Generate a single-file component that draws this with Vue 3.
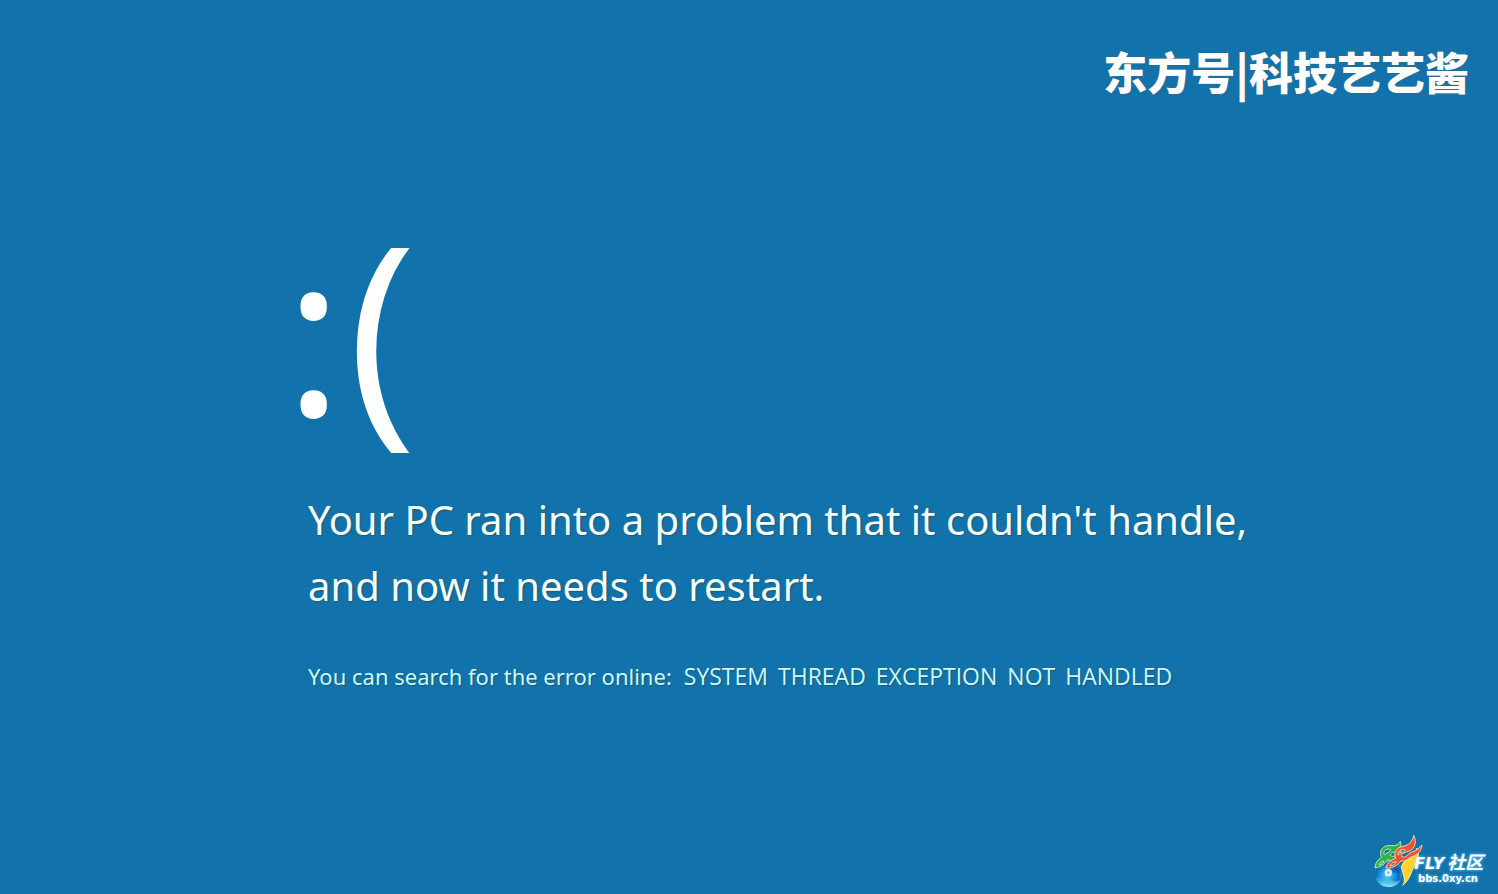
<script setup>
const messageLines = [
  "Your PC ran into a problem that it couldn't handle,",
  'and now it needs to restart.',
]
const errorWords = ['SYSTEM', 'THREAD', 'EXCEPTION', 'NOT', 'HANDLED']
</script>

<template>
  <div class="screen">
    <header class="channel">东方号|科技艺艺酱</header>

    <main class="crash">
      <div class="face"><span class="eyes">:</span><span>(</span></div>
      <h1 class="message">
        <span v-for="line in messageLines" :key="line" class="line">{{ line }}</span>
      </h1>
      <p class="hint">
        <span>You can search for the error online:</span>
        <span class="code">
          <span v-for="word in errorWords" :key="word">{{ word }}</span>
        </span>
      </p>
    </main>

    <footer class="community">
      <svg class="logo" viewBox="0 0 162 174" aria-hidden="true">
        <defs>
          <radialGradient id="disc" cx="46%" cy="60%" r="58%">
            <stop offset="0" stop-color="#5fd4f6" />
            <stop offset="0.4" stop-color="#1f9fe0" />
            <stop offset="0.75" stop-color="#0d62ba" />
            <stop offset="1" stop-color="#37b8ea" />
          </radialGradient>
          <linearGradient id="shine" x1="0" y1="0" x2="0" y2="1">
            <stop offset="0" stop-color="#2cb5ec" stop-opacity="0" />
            <stop offset="1" stop-color="#8ff6fb" />
          </linearGradient>
        </defs>
        <circle cx="55" cy="123" r="41" fill="url(#disc)" />
        <path d="M15 128C18 151 35 165 56 165C72 165 86 156 92 143C78 150 66 147 58 138C42 141 30 136 15 128Z" fill="url(#shine)" />
        <path d="M60 83C82 86 95 103 96 123L68 121C67 115 63 112 58 110Z" fill="#0b56ae" opacity="0.6" />
        <circle cx="55" cy="122" r="11" fill="#d9f6fd" />
        <circle cx="55" cy="122" r="4" fill="#6dbfe6" />
        <path
          d="M98 160C112 145 93 117 95 101C100 88 112 84 121 79C131 73 138 65 140 49C149 70 145 87 134 101C123 114 124 139 98 160Z"
          fill="#ffd42a" stroke="#fff0a0" stroke-width="3"
        />
        <g fill-rule="evenodd" stroke-linejoin="round" stroke-width="3">
          <path
            d="M15 107C17 89 25 83 35 76C27 63 34 44 52 41C70 40 83 45 91 28C97 45 87 57 73 60C61 63 56 70 67 73C78 74 84 63 93 55C94 72 82 84 67 85C61 86 57 84 52 83C46 94 35 106 15 107ZM43 69C39 58 45 51 58 51C67 51 59 60 51 63C46 65 46 69 43 69ZM27 98C30 90 36 87 42 87C40 94 34 98 27 98Z"
            fill="#35b044" stroke="#b9efae"
          />
          <path
            d="M48 108C50 92 62 86 77 79C69 61 80 46 99 43C117 40 128 28 131 10C142 31 134 51 116 58C101 63 90 66 96 74C108 80 112 65 128 59C140 55 148 48 156 39C154 59 141 69 128 73C115 78 107 90 92 87C84 98 72 110 48 108ZM84 69C82 57 91 52 104 52C110 53 102 59 94 62C88 64 88 69 84 69ZM60 101C65 93 71 90 79 89C76 97 69 101 60 101Z"
            fill="#f0532e" stroke="#ffd0ae"
          />
        </g>
      </svg>
      <div class="community-text">
        <span class="community-name">FLY<span class="community-zh">社区</span></span>
        <span class="community-site">bbs.0xy.cn</span>
      </div>
    </footer>
  </div>
</template>

<style>
body {
  margin: 0;
  background: #1273ac;
}
</style>

<style scoped>
.screen {
  display: flex;
  flex-direction: column;
  min-height: 100vh;
  box-sizing: border-box;
  background: #1273ac;
  color: #f4ffff;
  font-family: "Noto Sans", "Open Sans", sans-serif;
}

.channel {
  padding: 37px 29px 0 0;
  text-align: right;
  font: 900 44px/68px "Noto Sans CJK SC", sans-serif;
  color: #fff;
  text-shadow: 0 0 2px #4a6478;
}

.crash {
  flex: 1;
  padding: 101px 32px 0 308px;
}

.face {
  display: flex;
  align-items: baseline;
  gap: 4px;
  margin-left: -24px;
  font-family: "Open Sans", sans-serif;
  font-size: 234px;
  line-height: 240px;
  color: #fff;
}

.eyes {
  font-size: 226px;
}

.message {
  margin: 39px 0 0;
  font-size: 40px;
  font-weight: 400;
  line-height: 66px;
  text-shadow: 1px 1px 2px #24566f;
}

.line {
  display: block;
}

.hint {
  display: flex;
  flex-wrap: wrap;
  align-items: baseline;
  gap: 12px;
  margin: 40px 0 0;
  font-size: 22px;
  line-height: 34px;
  color: #c9fbff;
  text-shadow: 1px 1px 1px #24566f;
}

.code {
  display: flex;
  flex-wrap: wrap;
  gap: 10px;
  font-family: "Open Sans", sans-serif;
  font-size: 23px;
}

.community {
  display: flex;
  justify-content: flex-end;
  align-items: flex-end;
  padding: 0 8px 4px 0;
}

.logo {
  width: 54px;
  height: 58px;
  flex: none;
}

.community-text {
  display: flex;
  flex-direction: column;
  min-width: 76px;
  margin: 0 0 5px -10px;
  color: #fff;
  text-shadow: 0 0 3px #7fd4ff;
}

.community-name {
  display: flex;
  gap: 3px;
  align-items: baseline;
  font: italic 700 16px/18px "DejaVu Sans", sans-serif;
}

.community-zh {
  font: italic 700 18px/18px "Noto Sans CJK SC", sans-serif;
}

.community-site {
  padding-left: 4px;
  font: 700 10px/12px "DejaVu Sans", sans-serif;
}
</style>
